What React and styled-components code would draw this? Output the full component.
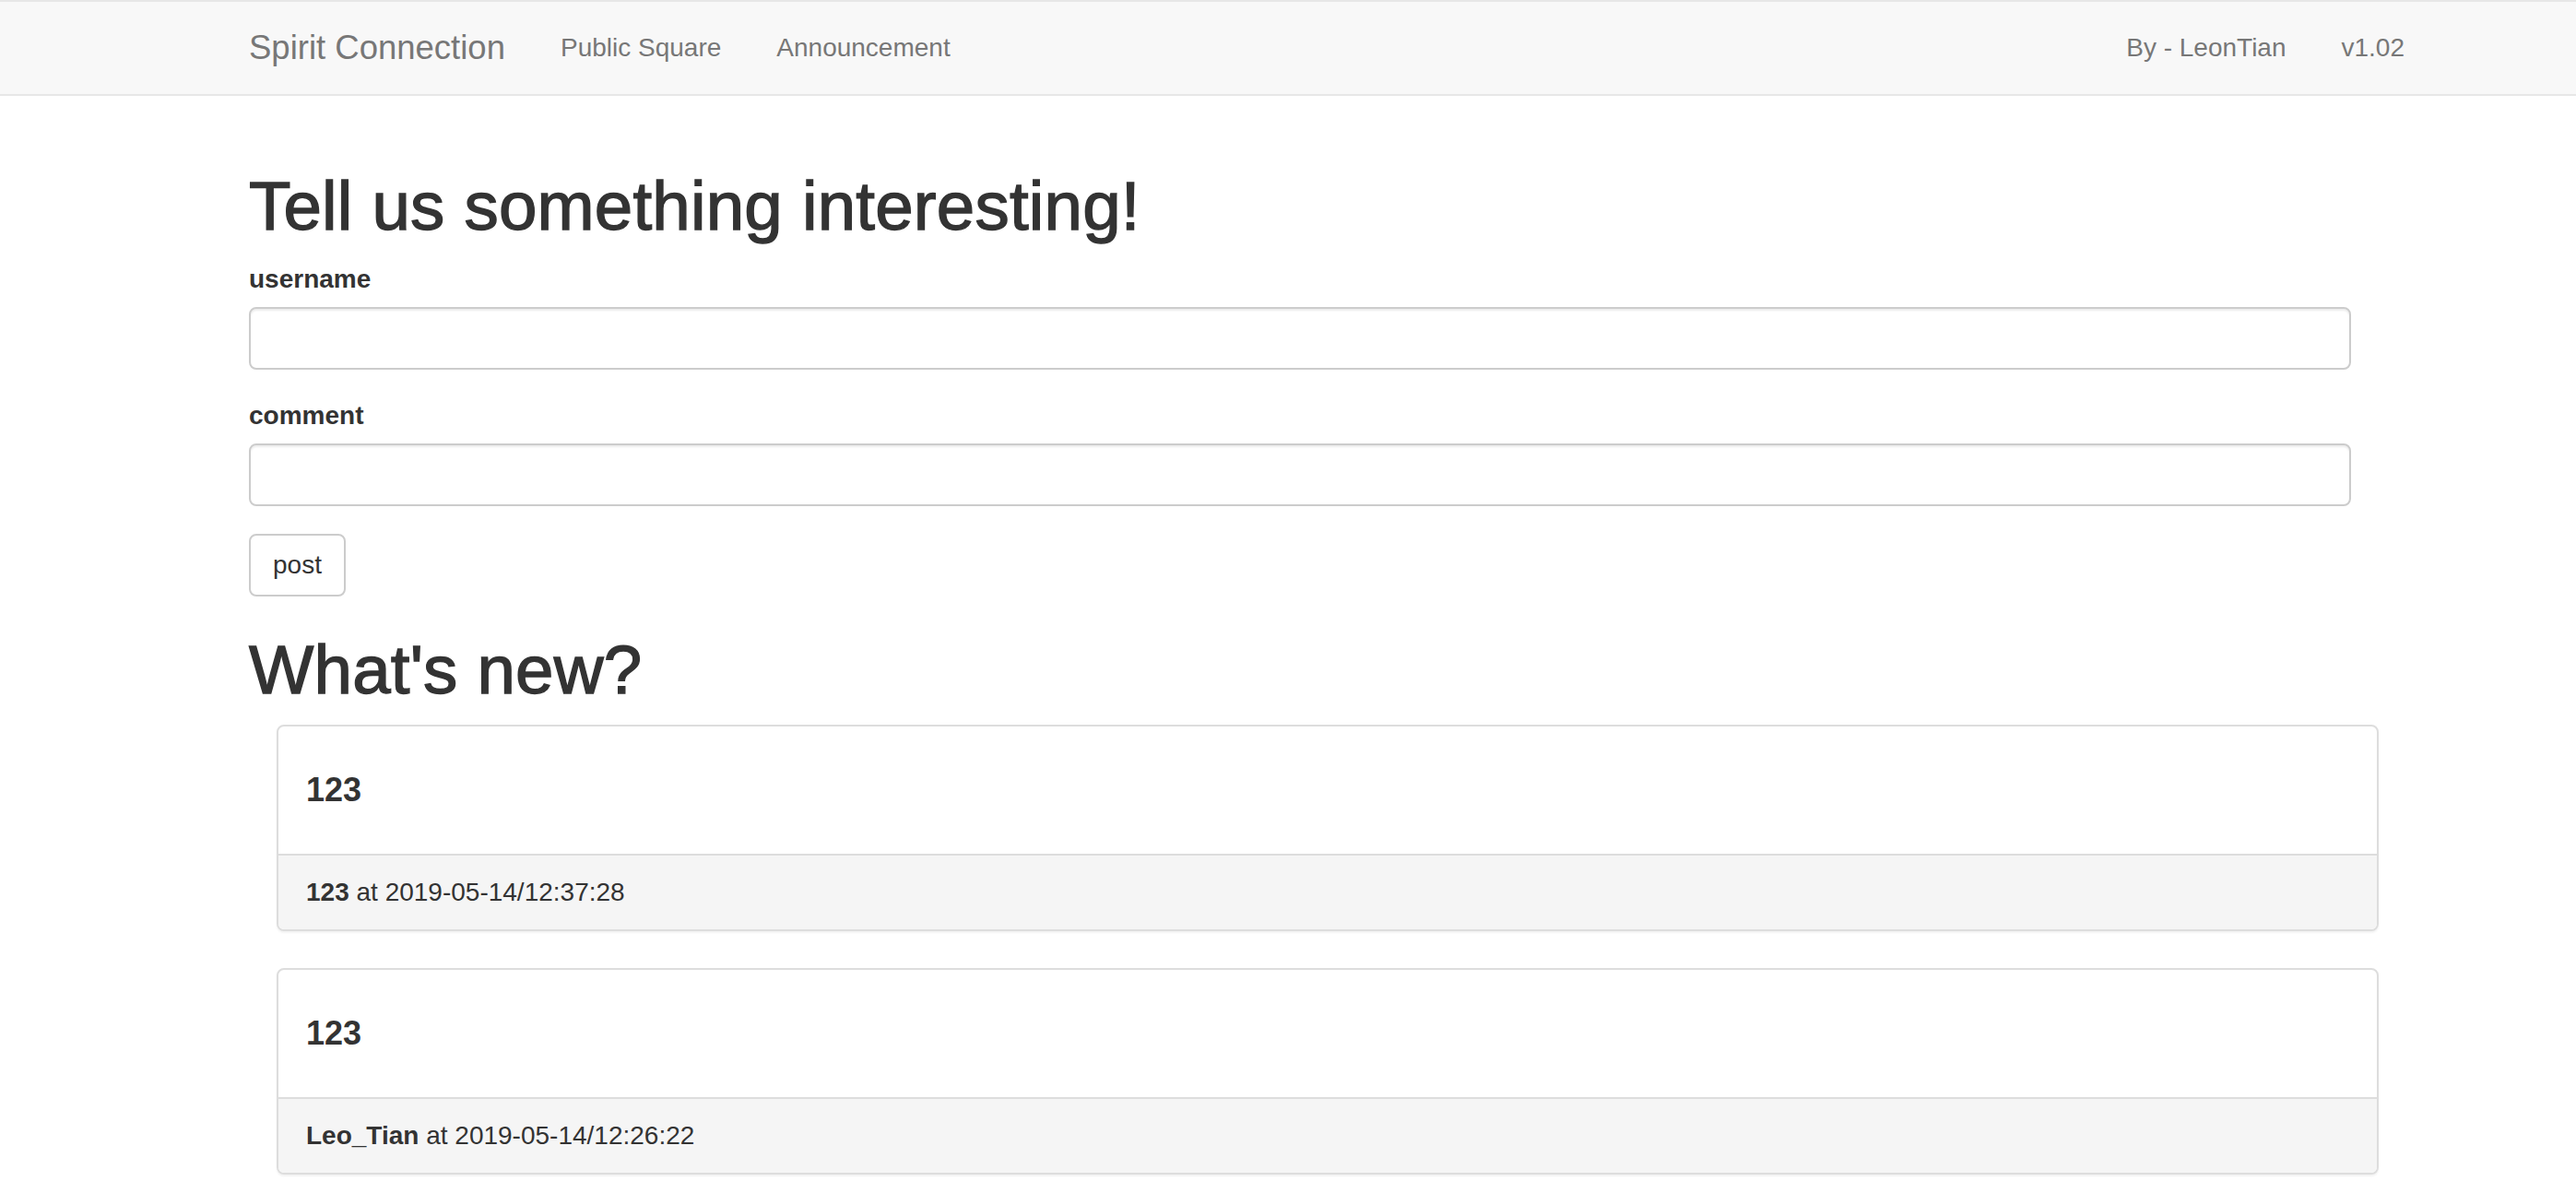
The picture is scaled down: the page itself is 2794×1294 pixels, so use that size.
import React from "react";
import styled, { createGlobalStyle } from "styled-components";

const GlobalStyle = createGlobalStyle`
  html, body {
    margin: 0;
    padding: 0;
    background: #fff;
  }

  body {
    font-family: "Liberation Sans", Arial, sans-serif;
    font-size: 28px;
    line-height: 40px;
    color: #333;
  }

  * {
    box-sizing: border-box;
  }
`;

export const Navbar = styled.nav`
  height: 104px;
  background: #f8f8f8;
  border-top: 2px solid #e7e7e7;
  border-bottom: 2px solid #e7e7e7;
  margin-bottom: 40px;
`;

export const NavInner = styled.div`
  display: flex;
  justify-content: space-between;
  height: 100px;
  padding: 0 156px 0 240px;
`;

export const NavGroup = styled.div`
  display: flex;
  align-items: stretch;
`;

export const Brand = styled.a`
  display: block;
  height: 100px;
  padding: 30px;
  font-size: 36.5px;
  line-height: 40px;
  color: #777;
  text-decoration: none;
`;

export const NavLink = styled.a`
  display: block;
  padding: 30px;
  font-size: 28px;
  line-height: 40px;
  color: #777;
  text-decoration: none;
`;

export const Container = styled.main`
  display: flow-root;
  width: 2340px;
  margin-left: 240px;
  padding: 0 30px;
`;

export const Title = styled.h1`
  margin: 40px 0 20px;
  font-size: 74.5px;
  font-weight: 500;
  line-height: 79px;
  letter-spacing: 0.2px;
  color: #333;
  -webkit-text-stroke: 1.4px #333;
`;

export const Form = styled.form`
  display: flex;
  flex-direction: column;
`;

export const FormGroup = styled.div`
  margin-bottom: 30px;
`;

export const Label = styled.label`
  display: block;
  margin-bottom: 10px;
  font-weight: bold;
  line-height: 40px;
`;

export const Input = styled.input`
  display: block;
  width: 100%;
  height: 68px;
  padding: 12px 24px;
  font-family: inherit;
  font-size: 28px;
  color: #555;
  background: #fff;
  border: 2px solid #ccc;
  border-radius: 8px;
  box-shadow: inset 0 2px 2px rgba(0, 0, 0, 0.075);
  outline: none;
`;

export const Button = styled.button`
  align-self: flex-start;
  height: 68px;
  padding: 12px 24px;
  font-family: inherit;
  font-size: 28px;
  line-height: 40px;
  color: #333;
  background: #fff;
  border: 2px solid #ccc;
  border-radius: 8px;
  cursor: pointer;
`;

export const Feed = styled.section`
  margin: 0 -30px 0 30px;
`;

export const Panel = styled.article`
  margin-bottom: 40px;
  background: #fff;
  border: 2px solid #ddd;
  border-radius: 8px;
  box-shadow: 0 2px 2px rgba(0, 0, 0, 0.05);
`;

export const PanelBody = styled.div`
  padding: 30px;
`;

export const PanelTitle = styled.h4`
  margin: 20px 0;
  font-size: 36px;
  font-weight: bold;
  line-height: 38px;
`;

export const PanelFooter = styled.div`
  padding: 20px 30px;
  background: #f5f5f5;
  border-top: 2px solid #ddd;
  border-radius: 0 0 6px 6px;
`;

const posts = [
  { id: 1, text: "123", user: "123", time: "2019-05-14/12:37:28" },
  { id: 2, text: "123", user: "Leo_Tian", time: "2019-05-14/12:26:22" },
];

const App = () => (
  <>
    <GlobalStyle />
    <Navbar>
      <NavInner>
        <NavGroup>
          <Brand href="#">Spirit Connection</Brand>
          <NavLink href="#">Public Square</NavLink>
          <NavLink href="#">Announcement</NavLink>
        </NavGroup>
        <NavGroup>
          <NavLink href="#">By - LeonTian</NavLink>
          <NavLink href="#">v1.02</NavLink>
        </NavGroup>
      </NavInner>
    </Navbar>
    <Container>
      <Title>Tell us something interesting!</Title>
      <Form onSubmit={(e) => e.preventDefault()}>
        <FormGroup>
          <Label htmlFor="username">username</Label>
          <Input id="username" type="text" />
        </FormGroup>
        <FormGroup>
          <Label htmlFor="comment">comment</Label>
          <Input id="comment" type="text" />
        </FormGroup>
        <Button type="submit">post</Button>
      </Form>
      <Title>What's new?</Title>
      <Feed>
        {posts.map((post) => (
          <Panel key={post.id}>
            <PanelBody>
              <PanelTitle>{post.text}</PanelTitle>
            </PanelBody>
            <PanelFooter>
              <strong>{post.user}</strong> at {post.time}
            </PanelFooter>
          </Panel>
        ))}
      </Feed>
    </Container>
  </>
);

export default App;
